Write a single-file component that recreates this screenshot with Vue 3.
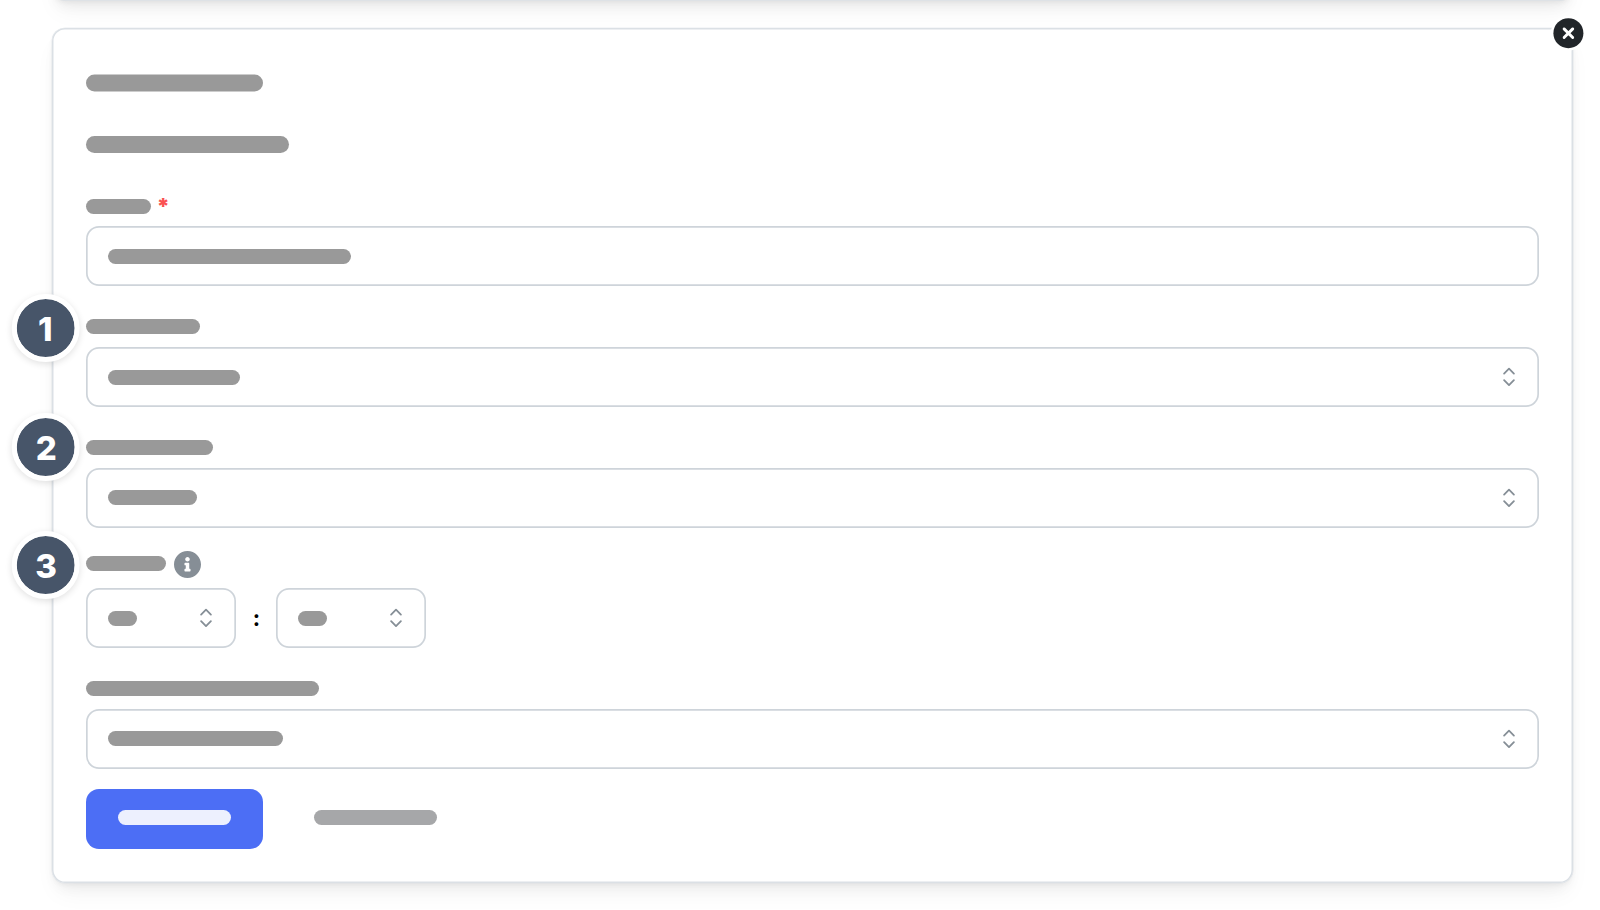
<script setup>
import { h } from 'vue'

const steps = [
  { n: 1, top: 294 },
  { n: 2, top: 413 },
  { n: 3, top: 531 },
]

const Chevrons = () =>
  h('svg', { width: 14, height: 20, viewBox: '0 0 14 20', fill: 'none', stroke: '#858e96', 'stroke-width': 1.8, 'stroke-linecap': 'round', 'stroke-linejoin': 'round' }, [
    h('path', { d: 'M2.1 6.6 7 1.7l4.9 4.9M2.1 13.2 7 18.1l4.9-4.9' }),
  ])
</script>

<template>
  <div class="page">
    <div class="previous"></div>
    <section class="card">
      <div class="bar title first w177"></div>
      <div class="bar title second w203"></div>

      <div class="label l1"><span class="bar w65"></span><span class="required">*</span></div>
      <div class="field"><span class="bar w244"></span></div>

      <div class="label l2"><span class="bar w114"></span></div>
      <div class="field"><span class="bar w132"></span><Chevrons /></div>

      <div class="label l2"><span class="bar w127"></span></div>
      <div class="field raised"><span class="bar w89"></span><Chevrons /></div>

      <div class="label l4">
        <span class="bar w80"></span>
        <svg class="info" width="27" height="27" viewBox="8 8 496 496" fill="#868e96">
          <path d="M256 8C119.043 8 8 119.083 8 256c0 136.997 111.043 248 248 248s248-111.003 248-248C504 119.083 392.957 8 256 8zm0 110c23.196 0 42 18.804 42 42s-18.804 42-42 42-42-18.804-42-42 18.804-42 42-42zm56 254c0 6.627-5.373 12-12 12h-88c-6.627 0-12-5.373-12-12v-24c0-6.627 5.373-12 12-12h12v-64h-12c-6.627 0-12-5.373-12-12v-24c0-6.627 5.373-12 12-12h64c6.627 0 12 5.373 12 12v100h12c6.627 0 12 5.373 12 12v24z" />
        </svg>
      </div>
      <div class="time">
        <div class="field small"><span class="bar w29"></span><Chevrons /></div>
        <span class="colon">:</span>
        <div class="field small"><span class="bar w29"></span><Chevrons /></div>
      </div>

      <div class="label l5"><span class="bar w233"></span></div>
      <div class="field raised"><span class="bar w175"></span><Chevrons /></div>

      <div class="actions">
        <div class="primary"><span class="bar w113"></span></div>
        <span class="bar muted w123"></span>
      </div>
    </section>

    <div v-for="s in steps" :key="s.n" class="step" :style="{ top: s.top + 'px' }"><span :class="{ one: s.n === 1 }">{{ s.n }}</span></div>

    <div class="close">
      <svg width="12" height="12" viewBox="0 0 12 12" stroke="#fff" stroke-width="2.9" stroke-linecap="round">
        <path d="M1.7 1.7 10.3 10.3M10.3 1.7 1.7 10.3" />
      </svg>
    </div>
  </div>
</template>

<style>
body { background: #fff; }
</style>

<style scoped>
.page {
  position: relative;
  width: 1600px;
  height: 910px;
  overflow: hidden;
  background: #fff;
  font-family: Inter, "Liberation Sans", sans-serif;
}
.previous {
  position: absolute;
  left: 52px;
  top: -39px;
  width: 1521px;
  height: 40px;
  box-sizing: border-box;
  border-radius: 13px;
  border: 2px solid #dee2e6;
  background: #fff;
  box-shadow: 0 2px 4px rgba(0, 0, 0, 0.04), 0 14px 24px -5px rgba(0, 0, 0, 0.05), 0 8px 14px -4px rgba(0, 0, 0, 0.06);
}
.card {
  position: relative;
  box-sizing: border-box;
  width: 1521px;
  height: 855px;
  margin: 28px 0 0 52px;
  padding: 46px 34px 0;
  border-radius: 13px;
  background: #fff;
  box-shadow: inset 0 0 0 1.5px #dbe0e5, 0 0 0 0.3px #dbe0e5, 0 2px 4px rgba(0, 0, 0, 0.04), 0 14px 24px -5px rgba(0, 0, 0, 0.05), 0 8px 14px -4px rgba(0, 0, 0, 0.05);
  display: flex;
  flex-direction: column;
}
.card > * { flex: none; }
.bar {
  display: block;
  height: 15px;
  border-radius: 8px;
  background: #999;
}
.title { height: 17px; border-radius: 9px; }
.first { transform: translateY(0.4px); }
.second { margin-top: 45px; }
.label { display: flex; height: 15px; }
.l1 { margin: 46px 0 12px; }
.l2 { margin: 33px 0 13px; }
.l4 { margin: 28px 0 17px; }
.l5 { margin: 33px 0 13px; }
.required {
  margin-left: 5.5px;
  height: 15px;
  line-height: 14px;
  font-size: 22px;
  font-weight: 900;
  color: #fa5252;
}
.info { margin: -5px 0 0 8px; flex: none; }
.field {
  box-sizing: border-box;
  height: 60px;
  width: 1452.5px;
  padding: 0 23px 1px 22px;
  border-radius: 13px;
  box-shadow: inset 0 0 0 1.7px #ced4da;
  display: flex;
  align-items: center;
  justify-content: space-between;
}
.field .bar { margin-top: 1px; }
.raised .bar { margin-top: -1px; }
.small { width: 150px; }
.time { display: flex; height: 60px; }
.colon {
  width: 39.5px;
  padding-left: 1.5px;
  box-sizing: border-box;
  text-align: center;
  font-size: 22px;
  font-weight: 700;
  line-height: 61px;
  color: #000;
}
.actions { display: flex; align-items: center; margin-top: 19px; height: 61px; }
.primary {
  box-sizing: border-box;
  width: 177px;
  height: 60px;
  padding: 0 32px 2px;
  border-radius: 13px;
  background: #4c6ef5;
  display: flex;
  align-items: center;
}
.primary .bar { background: #edf0fe; }
.muted { margin: -2px 0 0 51px; background: #a6a7a9; }
.w29 { width: 29px; }
.w65 { width: 65px; }
.w80 { width: 80px; }
.w89 { width: 89px; }
.w113 { width: 113px; }
.w114 { width: 113.5px; }
.w123 { width: 123px; }
.w127 { width: 127px; }
.w132 { width: 132px; }
.w175 { width: 175px; }
.w177 { width: 177px; }
.w203 { width: 203px; }
.w233 { width: 233px; }
.w244 { width: 243px; }
.step {
  position: absolute;
  left: 12px;
  width: 58px;
  height: 58px;
  border: 5px solid #fff;
  border-radius: 50%;
  background: #475569;
  background-clip: padding-box;
  box-shadow: 0 2px 7px rgba(0, 0, 0, 0.12);
  display: flex;
  align-items: center;
  justify-content: center;
  color: #fff;
  font-size: 33px;
  font-weight: 800;
  line-height: 58px;
  transform: translate(-0.3px, 0.1px);
}
.step span { margin: 2px 0 0 1px; }
.step .one { margin-left: -1px; }
.close {
  position: absolute;
  left: 1553px;
  top: 18px;
  width: 30px;
  height: 30px;
  border-radius: 50%;
  background: #212529;
  box-shadow: 0 0 0 2.5px #fff;
  display: flex;
  align-items: center;
  justify-content: center;
  transform: translate(0.4px, 0.2px);
}
</style>
